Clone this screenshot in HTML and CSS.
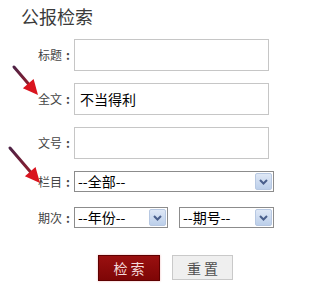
FILE: index.html
```html
<!DOCTYPE html>
<html lang="zh">
<head>
<meta charset="utf-8">
<title>公报检索</title>
<link rel="stylesheet" href="styles.css">
</head>
<body>
<div class="page">
  <h1 class="title">公报检索</h1>
  <form class="form">
    <div class="row row-1"><label class="lbl">标题<span class="colon">:</span></label><input class="txt" type="text"></div>
    <div class="row row-2"><label class="lbl">全文<span class="colon">:</span></label><input class="txt" type="text" value="不当得利"></div>
    <div class="row row-3"><label class="lbl">文号<span class="colon">:</span></label><input class="txt" type="text"></div>
    <div class="row row-4"><label class="lbl">栏目<span class="colon">:</span></label>
      <div class="sel sel-wide"><span class="sel-text">--全部--</span><span class="sel-btn"><svg width="9" height="6" viewBox="0 0 9 6"><polyline points="1,1 4.5,4.5 8,1" fill="none" stroke="#4a5f8c" stroke-width="2"/></svg></span></div>
    </div>
    <div class="row row-5"><label class="lbl">期次<span class="colon">:</span></label>
      <div class="sel sel-half"><span class="sel-text">--年份--</span><span class="sel-btn"><svg width="9" height="6" viewBox="0 0 9 6"><polyline points="1,1 4.5,4.5 8,1" fill="none" stroke="#4a5f8c" stroke-width="2"/></svg></span></div>
      <div class="sel sel-half sel-second"><span class="sel-text">--期号--</span><span class="sel-btn"><svg width="9" height="6" viewBox="0 0 9 6"><polyline points="1,1 4.5,4.5 8,1" fill="none" stroke="#4a5f8c" stroke-width="2"/></svg></span></div>
    </div>
    <div class="actions">
      <button type="button" class="btn btn-search">检 索</button>
      <button type="button" class="btn btn-reset">重 置</button>
    </div>
  </form>
  <svg class="arrows" width="311" height="291" viewBox="0 0 311 291">
    <defs>
      <linearGradient id="shaft1" gradientUnits="userSpaceOnUse" x1="14" y1="67" x2="29" y2="84">
        <stop offset="0" stop-color="#4e2346"/>
        <stop offset="1" stop-color="#8e1c2c"/>
      </linearGradient>
      <linearGradient id="shaft2" gradientUnits="userSpaceOnUse" x1="10" y1="148" x2="31" y2="172">
        <stop offset="0" stop-color="#4e2346"/>
        <stop offset="1" stop-color="#8e1c2c"/>
      </linearGradient>
    </defs>
    <line x1="14" y1="67" x2="29" y2="84.5" stroke="url(#shaft1)" stroke-width="3" stroke-linecap="round"/>
    <polygon points="38,95 22.9,88.2 33.6,79.1" fill="#d9141e"/>
    <line x1="10" y1="148" x2="31" y2="172.5" stroke="url(#shaft2)" stroke-width="3" stroke-linecap="round"/>
    <polygon points="40,183 24.9,176.2 35.5,167" fill="#d9141e"/>
  </svg>
</div>
</body>
</html>
```

FILE: styles.css
```css
body {
  margin: 0;
  background: #ffffff;
  font-family: "Noto Sans CJK SC", "Noto Sans", sans-serif;
}

.page {
  position: relative;
  width: 311px;
  height: 291px;
  overflow: hidden;
}

.title {
  margin: 0;
  padding: 4px 0 0 21px;
  font-size: 18px;
  line-height: 24px;
  font-weight: normal;
  color: #3a3a3a;
}

.form {
  margin: 11px 0 0 0;
}

.row {
  display: flex;
  align-items: center;
}

.row-2 { margin-top: 12px; }
.row-3 { margin-top: 12px; }
.row-4 { margin-top: 12px; }
.row-5 { margin-top: 15px; }

.lbl {
  flex: none;
  box-sizing: border-box;
  width: 74px;
  padding-right: 4px;
  text-align: right;
  font-size: 12px;
  line-height: 16px;
  color: #444444;
}

.colon {
  margin-left: 4px;
  font-weight: bold;
}

.txt {
  flex: none;
  box-sizing: border-box;
  width: 195px;
  height: 32px;
  margin: 0;
  padding: 0 5px;
  border: 1px solid #c6c6c6;
  background: #ffffff;
  font-family: "Noto Sans CJK SC", sans-serif;
  font-size: 14px;
  color: #000000;
  outline: none;
}

.sel {
  flex: none;
  display: flex;
  align-items: center;
  box-sizing: border-box;
  height: 21px;
  border: 1px solid #8c8c8c;
  background: #ffffff;
  font-size: 14px;
  color: #000000;
}

.sel-wide { width: 200px; }
.sel-half { width: 94px; }
.sel-second { margin-left: 11px; width: 95px; }

.sel-text {
  flex: 1;
  padding-left: 3px;
  line-height: 19px;
  white-space: nowrap;
}

.sel-btn {
  flex: none;
  display: flex;
  align-items: center;
  justify-content: center;
  box-sizing: border-box;
  width: 17px;
  height: 17px;
  margin-right: 1px;
  border: 1px solid #b7c8e2;
  border-radius: 2px;
  background: linear-gradient(#dfe8f6, #bccfea);
}

.actions {
  display: flex;
  align-items: flex-start;
  gap: 12px;
  margin-top: 27px;
  padding-left: 98px;
}

.btn {
  margin: 0;
  padding: 0;
  box-sizing: border-box;
  font-family: "Noto Sans CJK SC", sans-serif;
  font-size: 14px;
  line-height: 1;
  cursor: pointer;
}

.btn-search {
  width: 62px;
  height: 26px;
  border: 1px solid #5e0000;
  background: linear-gradient(#9a1010, #7e0606);
  color: #f4dada;
  box-shadow: 0 0 2px rgba(210, 40, 40, 0.35);
}

.btn-reset {
  width: 61px;
  height: 25px;
  border: 1px solid #c9c9c9;
  background: #efefef;
  color: #505050;
}

.arrows {
  position: absolute;
  left: 0;
  top: 0;
  pointer-events: none;
}
```
